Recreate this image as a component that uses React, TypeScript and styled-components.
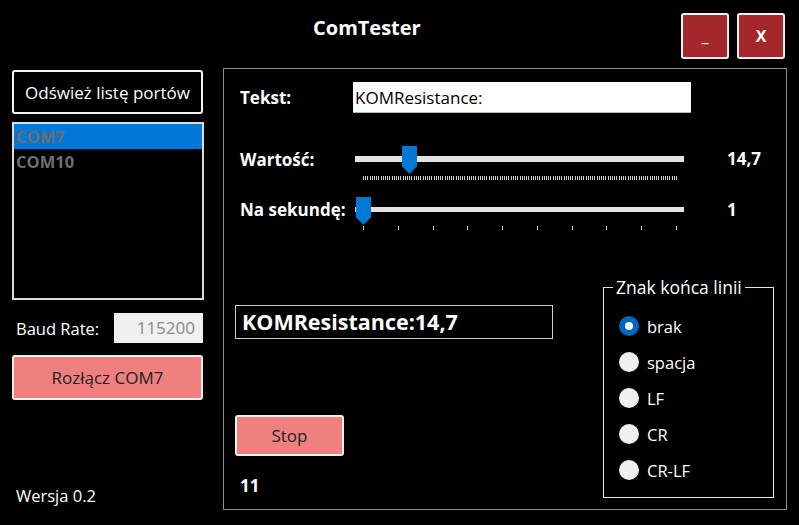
import React from 'react';
import styled, { createGlobalStyle } from 'styled-components';

const GlobalStyle = createGlobalStyle`
  html, body {
    margin: 0;
    padding: 0;
    background: #000;
  }
  body {
    font-family: 'Open Sans', 'Noto Sans', sans-serif;
    color: #fff;
  }
  * {
    box-sizing: border-box;
  }
`;

const Window = styled.div`
  width: 799px;
  height: 525px;
  background: #000;
  display: flex;
  flex-direction: column;
  overflow: hidden;
`;

const Header = styled.div`
  height: 68px;
  display: flex;
  align-items: flex-start;
  padding: 13px 14px 0 313px;
`;

const Title = styled.div`
  font-size: 20px;
  font-weight: 700;
  line-height: 30px;
  flex: 1;
`;

const WinButtons = styled.div`
  display: flex;
  gap: 8px;
`;

const WinButton = styled.button`
  width: 48px;
  height: 46px;
  background: #a4282b;
  border: 2px solid #f2f2f2;
  border-radius: 3px;
  color: #fff;
  font-family: inherit;
  font-size: 16px;
  font-weight: 700;
  padding: 0;
`;

const Body = styled.div`
  display: flex;
  gap: 19px;
  padding-left: 12px;
`;

const LeftColumn = styled.div`
  width: 192px;
  height: 441px;
  margin-top: 2px;
  display: flex;
  flex-direction: column;
`;

const OutlineButton = styled.button`
  height: 44px;
  width: 191px;
  background: #000;
  color: #fff;
  border: 2px solid #f4f4f4;
  border-radius: 3px;
  font-family: inherit;
  font-size: 17px;
  padding: 0;
`;

const PortList = styled.div`
  margin-top: 8px;
  height: 178px;
  border: 2px solid #dcdcdc;
  display: flex;
  flex-direction: column;
`;

const PortItem = styled.div<{ $selected?: boolean }>`
  height: 25px;
  line-height: 25px;
  padding-left: 2px;
  font-size: 16.5px;
  font-weight: 700;
  color: #6e6e6e;
  background: ${(p) => (p.$selected ? '#0078d7' : 'transparent')};
`;

const BaudRow = styled.div`
  margin-top: 13px;
  display: flex;
  align-items: center;
  justify-content: space-between;
  padding-left: 4px;
  height: 30px;
`;

const SmallLabel = styled.span`
  font-size: 16.5px;
  color: #fff;
`;

const BaudInput = styled.div`
  width: 89px;
  height: 30px;
  background: #f0f0f0;
  color: #8a8a8a;
  font-size: 17px;
  line-height: 30px;
  text-align: right;
  padding-right: 8px;
  margin-right: 1px;
`;

const RedButton = styled.button<{ $width: number; $height: number }>`
  width: ${(p) => p.$width}px;
  height: ${(p) => p.$height}px;
  background: #f08080;
  color: #222;
  border: 2px solid #eeeeee;
  border-radius: 3px;
  font-family: inherit;
  font-size: 17px;
  padding: 0;
`;

const Version = styled.div`
  margin-top: auto;
  margin-bottom: 3px;
  padding-left: 4px;
  font-size: 16.5px;
  line-height: 24px;
`;

const Panel = styled.div`
  width: 564px;
  height: 442px;
  border: 1px solid #8c8c8c;
  padding: 0 12px 11px 11px;
  display: flex;
  flex-direction: column;
`;

const FormGrid = styled.div`
  margin-top: 13px;
  display: grid;
  grid-template-columns: 120px 329px 43px auto;
`;

const Label = styled.div<{ $top: number }>`
  font-size: 17px;
  font-weight: 700;
  line-height: 24px;
  padding-left: 5px;
  margin-top: ${(p) => p.$top}px;
  white-space: nowrap;
`;

const TextInput = styled.div`
  grid-column: 2 / span 3;
  margin-left: -2px;
  width: 338px;
  height: 31px;
  background: #fff;
  color: #000;
  font-size: 17px;
  line-height: 31px;
  padding-left: 2px;
  border-bottom: 1px solid #b5b5b5;
`;

const Value = styled.div<{ $top: number }>`
  grid-column: 4;
  font-size: 17px;
  font-weight: 700;
  line-height: 24px;
  margin-top: ${(p) => p.$top}px;
`;

const SliderBox = styled.div<{ $top: number }>`
  position: relative;
  height: 34px;
  margin-top: ${(p) => p.$top}px;
`;

const Track = styled.div<{ $height: number }>`
  position: absolute;
  left: 0;
  right: 0;
  top: 10px;
  height: ${(p) => p.$height}px;
  background: #e3e3e3;
`;

const Thumb = styled.div<{ $left: number }>`
  position: absolute;
  top: 0;
  left: ${(p) => p.$left}px;
  width: 15px;
  height: 28px;
  background: #0078d7;
  clip-path: polygon(0 0, 100% 0, 100% 72%, 50% 100%, 0 72%);
`;

const Ticks = styled.svg<{ $top: number }>`
  position: absolute;
  left: 8px;
  top: ${(p) => p.$top}px;
  overflow: visible;
`;

const Bottom = styled.div`
  margin-top: auto;
  display: flex;
  justify-content: space-between;
  align-items: flex-end;
`;

const OutputColumn = styled.div`
  display: flex;
  flex-direction: column;
  align-items: flex-start;
`;

const OutputBox = styled.div`
  width: 318px;
  height: 34px;
  border: 1px solid #cfcfcf;
  font-size: 21.5px;
  font-weight: 700;
  line-height: 31px;
  padding-left: 6px;
  margin-bottom: 76px;
  white-space: nowrap;
`;

const Counter = styled.div`
  margin-top: 18px;
  padding-left: 5px;
  font-size: 17px;
  font-weight: 700;
  line-height: 24px;
`;

const Group = styled.fieldset`
  width: 171px;
  height: 222px;
  margin: 0;
  padding: 10px 0 0 15px;
  border: 1px solid #e6e6e6;
  border-radius: 0;
`;

const Legend = styled.legend`
  font-size: 17.5px;
  line-height: 22px;
  padding: 0 3px;
  margin-left: -6px;
`;

const RadioRow = styled.label`
  display: flex;
  align-items: center;
  gap: 8px;
  height: 36px;
  font-size: 16.5px;
`;

const RadioDot = styled.span<{ $checked?: boolean }>`
  width: 20px;
  height: 20px;
  border-radius: 50%;
  background: ${(p) => (p.$checked ? '#0067c0' : '#f0f0f0')};
  display: flex;
  align-items: center;
  justify-content: center;

  &::after {
    content: '';
    width: 8px;
    height: 8px;
    border-radius: 50%;
    background: #fff;
    display: ${(p) => (p.$checked ? 'block' : 'none')};
  }
`;

const TickMarks: React.FC<{ count: number; top: number; height: number }> = ({ count, top, height }) => {
  const span = 313;
  const xs = Array.from({ length: count }, (_, i) => Math.round((i * span) / (count - 1)) + 0.5);
  return (
    <Ticks $top={top} width={span + 1} height={height}>
      {xs.map((x) => (
        <line key={x} x1={x} x2={x} y1={0} y2={height} stroke="#cfcfcf" strokeWidth={1} shapeRendering="crispEdges" />
      ))}
    </Ticks>
  );
};

const endings = ['brak', 'spacja', 'LF', 'CR', 'CR-LF'];

const App: React.FC = () => {
  return (
    <Window>
      <GlobalStyle />
      <Header>
        <Title>ComTester</Title>
        <WinButtons>
          <WinButton>_</WinButton>
          <WinButton>X</WinButton>
        </WinButtons>
      </Header>
      <Body>
        <LeftColumn>
          <OutlineButton>Odśwież listę portów</OutlineButton>
          <PortList>
            <PortItem $selected>COM7</PortItem>
            <PortItem>COM10</PortItem>
          </PortList>
          <BaudRow>
            <SmallLabel>Baud Rate:</SmallLabel>
            <BaudInput>115200</BaudInput>
          </BaudRow>
          <RedButton $width={191} $height={45} style={{ marginTop: 12 }}>
            Rozłącz COM7
          </RedButton>
          <Version>Wersja 0.2</Version>
        </LeftColumn>
        <Panel>
          <FormGrid>
            <Label $top={4}>Tekst:</Label>
            <TextInput>KOMResistance:</TextInput>

            <Label $top={35}>Wartość:</Label>
            <SliderBox $top={33}>
              <Track $height={6} />
              <TickMarks count={143} top={30} height={4} />
              <Thumb $left={47} />
            </SliderBox>
            <div />
            <Value $top={34}>14,7</Value>

            <Label $top={18}>Na sekundę:</Label>
            <SliderBox $top={17}>
              <Track $height={5} />
              <TickMarks count={10} top={29} height={4} />
              <Thumb $left={1} />
            </SliderBox>
            <div />
            <Value $top={18}>1</Value>
          </FormGrid>
          <Bottom>
            <OutputColumn>
              <OutputBox>KOMResistance:14,7</OutputBox>
              <RedButton $width={109} $height={41}>
                Stop
              </RedButton>
              <Counter>11</Counter>
            </OutputColumn>
            <Group>
              <Legend>Znak końca linii</Legend>
              {endings.map((e, i) => (
                <RadioRow key={e}>
                  <RadioDot $checked={i === 0} />
                  {e}
                </RadioRow>
              ))}
            </Group>
          </Bottom>
        </Panel>
      </Body>
    </Window>
  );
};

export default App;
